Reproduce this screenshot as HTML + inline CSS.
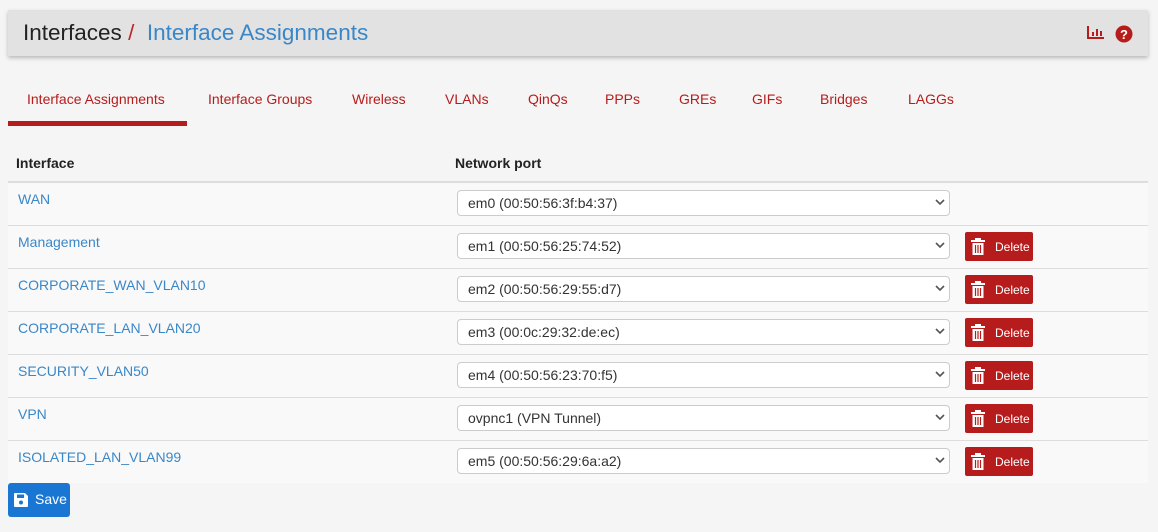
<!DOCTYPE html>
<html><head><style>
body{margin:0;background:#f5f5f5;font-family:"Liberation Sans",Roboto,sans-serif;width:1158px;height:532px;overflow:hidden;position:relative}
.hdr{position:absolute;left:8px;top:10px;width:1140px;height:46px;background:#e2e2e2;box-shadow:0 2px 4px rgba(0,0,0,.25)}
.hdr .t{position:absolute;left:15px;top:10px;font-size:22.5px;color:#222}
.hdr .t .s{color:#c5242b}
.hdr .t .b{color:#3a87c8}
.tabs{position:absolute;top:91px;left:0;font-size:14px;color:#b71c1c}
.tabs span{position:absolute;white-space:nowrap}
.ul{position:absolute;left:8px;top:121px;width:179px;height:5px;background:#b71c1c}
.th{position:absolute;top:155px;font-size:14px;font-weight:bold;color:#222}
.hl{position:absolute;left:8px;top:181px;width:1140px;height:2px;background:#ddd}
.row{position:absolute;left:8px;width:1140px;height:42px;background:#f9f9f9;border-bottom:1px solid #ddd}
.row a{position:absolute;left:10px;top:8px;color:#3a87c8;font-size:14px}
.sel{position:absolute;left:449px;top:7px;height:24px;border:1px solid #ccc;border-radius:4px;background:#fff;font-size:14px;color:#333;line-height:24px;padding-left:10px;box-sizing:content-box;width:481px}
.sel svg{position:absolute;right:4px;top:8px}
.del{position:absolute;left:957px;top:6px;width:68px;height:29px;background:#b71c1c;border-radius:2px;color:#fff;font-size:12px}
.del span{position:absolute;left:30px;top:8px}
.del svg{position:absolute;left:5px;top:6px}
.save{position:absolute;left:8px;top:483px;width:62px;height:34px;background:#1976d2;border-radius:3px;color:#fff;font-size:14px}
</style></head><body>
<div class="hdr"><div class="t">Interfaces <span class="s">/</span>&nbsp; <span class="b">Interface Assignments</span></div>
<svg style="position:absolute;left:1079px;top:15px" width="18" height="14"><path d="M1 1V13H17" stroke="#b71c1c" stroke-width="2" fill="none"/><rect x="5" y="7" width="2" height="4" fill="#b71c1c"/><rect x="9" y="4" width="2" height="7" fill="#b71c1c"/><rect x="13" y="6" width="2" height="5" fill="#b71c1c"/></svg>
<svg style="position:absolute;left:1107px;top:15px" width="18" height="18"><circle cx="9" cy="9" r="8.5" fill="#b71c1c"/><text x="9" y="14" font-size="13" font-weight="bold" fill="#fff" text-anchor="middle" font-family="Liberation Sans">?</text></svg>
</div>
<div class="tabs">
<span style="left:27px">Interface Assignments</span><span style="left:208px">Interface Groups</span><span style="left:352px">Wireless</span><span style="left:445px">VLANs</span><span style="left:528px">QinQs</span><span style="left:605px">PPPs</span><span style="left:679px">GREs</span><span style="left:752px">GIFs</span><span style="left:820px">Bridges</span><span style="left:908px">LAGGs</span>
</div>
<div class="ul"></div>
<div class="th" style="left:16px">Interface</div><div class="th" style="left:455px">Network port</div>
<div class="hl"></div>

<div class="row" style="top:183px"><a>WAN</a><div class="sel">em0 (00:50:56:3f:b4:37)<svg width="10" height="7"><path d="M1 1L5 5L9 1" stroke="#555" stroke-width="1.6" fill="none"/></svg></div></div>
<div class="row" style="top:226px"><a>Management</a><div class="sel">em1 (00:50:56:25:74:52)<svg width="10" height="7"><path d="M1 1L5 5L9 1" stroke="#555" stroke-width="1.6" fill="none"/></svg></div><div class="del"><svg width="16" height="18"><rect x="1" y="2" width="14" height="2" fill="#fff"/><rect x="5" y="0" width="6" height="2" fill="#fff"/><path d="M2.5 5h11v12h-11z" fill="#fff"/><path d="M5.5 7v8M8 7v8M10.5 7v8" stroke="#b71c1c" stroke-width="1.2"/></svg><span>Delete</span></div></div>
<div class="row" style="top:269px"><a>CORPORATE_WAN_VLAN10</a><div class="sel">em2 (00:50:56:29:55:d7)<svg width="10" height="7"><path d="M1 1L5 5L9 1" stroke="#555" stroke-width="1.6" fill="none"/></svg></div><div class="del"><svg width="16" height="18"><rect x="1" y="2" width="14" height="2" fill="#fff"/><rect x="5" y="0" width="6" height="2" fill="#fff"/><path d="M2.5 5h11v12h-11z" fill="#fff"/><path d="M5.5 7v8M8 7v8M10.5 7v8" stroke="#b71c1c" stroke-width="1.2"/></svg><span>Delete</span></div></div>
<div class="row" style="top:312px"><a>CORPORATE_LAN_VLAN20</a><div class="sel">em3 (00:0c:29:32:de:ec)<svg width="10" height="7"><path d="M1 1L5 5L9 1" stroke="#555" stroke-width="1.6" fill="none"/></svg></div><div class="del"><svg width="16" height="18"><rect x="1" y="2" width="14" height="2" fill="#fff"/><rect x="5" y="0" width="6" height="2" fill="#fff"/><path d="M2.5 5h11v12h-11z" fill="#fff"/><path d="M5.5 7v8M8 7v8M10.5 7v8" stroke="#b71c1c" stroke-width="1.2"/></svg><span>Delete</span></div></div>
<div class="row" style="top:355px"><a>SECURITY_VLAN50</a><div class="sel">em4 (00:50:56:23:70:f5)<svg width="10" height="7"><path d="M1 1L5 5L9 1" stroke="#555" stroke-width="1.6" fill="none"/></svg></div><div class="del"><svg width="16" height="18"><rect x="1" y="2" width="14" height="2" fill="#fff"/><rect x="5" y="0" width="6" height="2" fill="#fff"/><path d="M2.5 5h11v12h-11z" fill="#fff"/><path d="M5.5 7v8M8 7v8M10.5 7v8" stroke="#b71c1c" stroke-width="1.2"/></svg><span>Delete</span></div></div>
<div class="row" style="top:398px"><a>VPN</a><div class="sel">ovpnc1 (VPN Tunnel)<svg width="10" height="7"><path d="M1 1L5 5L9 1" stroke="#555" stroke-width="1.6" fill="none"/></svg></div><div class="del"><svg width="16" height="18"><rect x="1" y="2" width="14" height="2" fill="#fff"/><rect x="5" y="0" width="6" height="2" fill="#fff"/><path d="M2.5 5h11v12h-11z" fill="#fff"/><path d="M5.5 7v8M8 7v8M10.5 7v8" stroke="#b71c1c" stroke-width="1.2"/></svg><span>Delete</span></div></div>
<div class="row" style="top:441px;border-bottom:none"><a>ISOLATED_LAN_VLAN99</a><div class="sel">em5 (00:50:56:29:6a:a2)<svg width="10" height="7"><path d="M1 1L5 5L9 1" stroke="#555" stroke-width="1.6" fill="none"/></svg></div><div class="del"><svg width="16" height="18"><rect x="1" y="2" width="14" height="2" fill="#fff"/><rect x="5" y="0" width="6" height="2" fill="#fff"/><path d="M2.5 5h11v12h-11z" fill="#fff"/><path d="M5.5 7v8M8 7v8M10.5 7v8" stroke="#b71c1c" stroke-width="1.2"/></svg><span>Delete</span></div></div>

<div class="save"><svg style="position:absolute;left:5px;top:9px" width="16" height="16"><path d="M1 2a1 1 0 0 1 1-1h10l3 3v10a1 1 0 0 1-1 1H2a1 1 0 0 1-1-1z" fill="#fff"/><rect x="4" y="2.5" width="7" height="3.5" fill="#1976d2"/><circle cx="8" cy="10.5" r="2" fill="#1976d2"/></svg><span style="position:absolute;left:27px;top:8px">Save</span></div>
</body></html>
